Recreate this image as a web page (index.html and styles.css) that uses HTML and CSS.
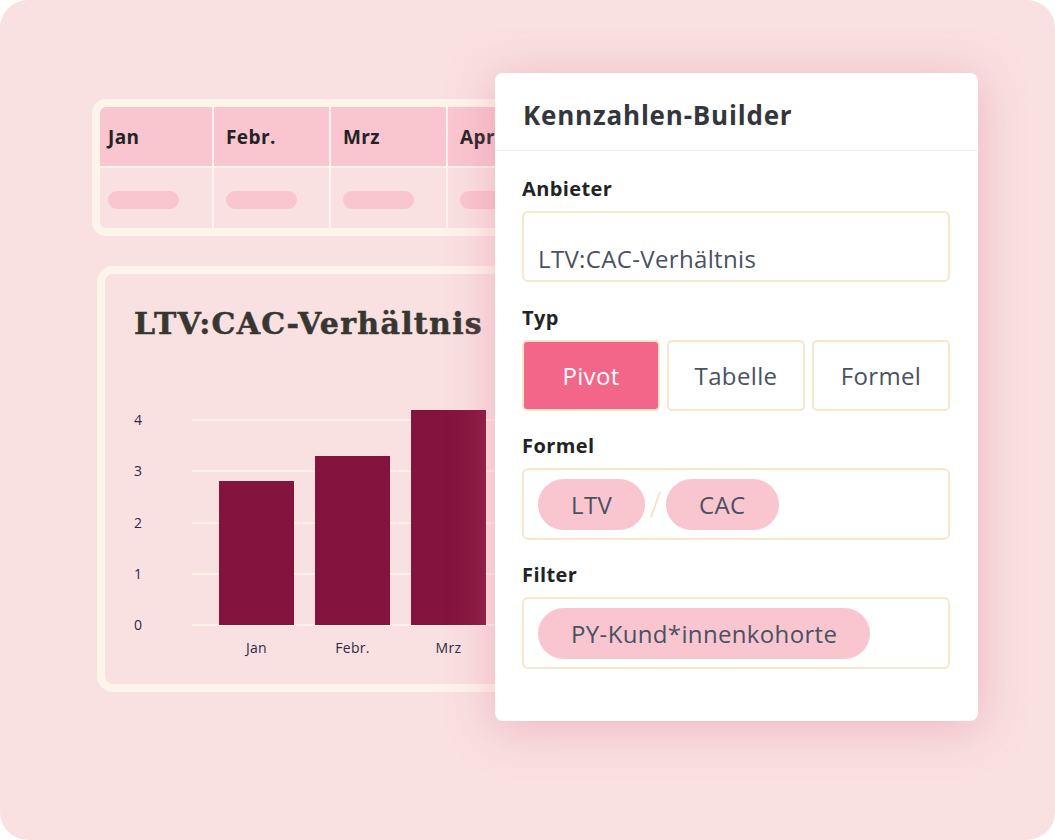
FILE: index.html
```html
<!DOCTYPE html>
<html lang="de">
<head>
<meta charset="utf-8">
<title>Kennzahlen-Builder</title>
<link rel="stylesheet" href="styles.css">
</head>
<body>
<div class="frame">
  <div class="table-card">
    <div class="cell head">Jan</div>
    <div class="cell head">Febr.</div>
    <div class="cell head">Mrz</div>
    <div class="cell head">Apr</div>
    <div class="cell body"><span class="pill"></span></div>
    <div class="cell body"><span class="pill"></span></div>
    <div class="cell body"><span class="pill"></span></div>
    <div class="cell body"><span class="pill"></span></div>
  </div>

  <div class="chart-card">
    <h2 class="chart-title">LTV:CAC-Verhältnis</h2>
    <div class="plot">
      <div class="grid-rows">
        <div class="grid-row"><span class="ylabel">4</span><span class="gline"></span></div>
        <div class="grid-row"><span class="ylabel">3</span><span class="gline"></span></div>
        <div class="grid-row"><span class="ylabel">2</span><span class="gline"></span></div>
        <div class="grid-row"><span class="ylabel">1</span><span class="gline"></span></div>
        <div class="grid-row"><span class="ylabel">0</span><span class="gline"></span></div>
      </div>
      <div class="bars">
        <div class="bar" style="height:144px"></div>
        <div class="bar" style="height:169px"></div>
        <div class="bar" style="height:215px"></div>
      </div>
    </div>
    <div class="xlabels">
      <span class="xlabel">Jan</span>
      <span class="xlabel">Febr.</span>
      <span class="xlabel">Mrz</span>
    </div>
  </div>

  <div class="panel">
    <div class="panel-head">Kennzahlen-Builder</div>
    <div class="panel-body">
      <div class="label">Anbieter</div>
      <div class="field text-field">LTV:CAC-Verhältnis</div>

      <div class="label">Typ</div>
      <div class="seg">
        <div class="seg-btn active">Pivot</div>
        <div class="seg-btn">Tabelle</div>
        <div class="seg-btn">Formel</div>
      </div>

      <div class="label">Formel</div>
      <div class="field chip-field">
        <span class="chip">LTV</span>
        <span class="slash">/</span>
        <span class="chip">CAC</span>
      </div>

      <div class="label">Filter</div>
      <div class="field chip-field last">
        <span class="chip">PY-Kund*innenkohorte</span>
      </div>
    </div>
  </div>
</div>
</body>
</html>
```

FILE: styles.css
```css
* { box-sizing: border-box; }

html, body {
  margin: 0;
  padding: 0;
  background: #ffffff;
}

body {
  font-family: "Open Sans", "Noto Sans", sans-serif;
  color: #222327;
}

.frame {
  position: relative;
  width: 1055px;
  height: 840px;
  border-radius: 28px;
  background: #f9e0e1;
  overflow: hidden;
  padding: 99px 0 0 92px;
}

/* ---------- table card ---------- */
.table-card {
  width: 480px;
  display: grid;
  grid-template-columns: 112px 115px 115px 115px;
  grid-template-rows: 59px 60px;
  gap: 2px;
  background: #fdf4ea;
  border: 8px solid #fdf4ea;
  border-radius: 14px;
  overflow: hidden;
}

.cell {
  padding-left: 12px;
}

.cell:nth-child(4n+1) {
  padding-left: 8px;
}

.cell.head {
  background: #f9c6d0;
  display: flex;
  align-items: center;
  font-size: 19px;
  font-weight: 700;
  letter-spacing: 0.4px;
  color: #232326;
}

.cell.body {
  background: #f9e0e1;
  padding-top: 23px;
}

.pill {
  display: block;
  width: 71px;
  height: 18px;
  border-radius: 9px;
  background: #f9c6d0;
}

/* ---------- chart card ---------- */
.chart-card {
  width: 480px;
  height: 426px;
  margin: 30px 0 0 5px;
  border: 8px solid #fdf4ea;
  border-radius: 16px;
  background: #f9e0e1;
  padding: 32px 0 0 29px;
}

.chart-title {
  margin: 0;
  font-family: "DejaVu Serif", "Liberation Serif", serif;
  font-weight: 700;
  font-size: 30px;
  line-height: 36px;
  letter-spacing: 1.3px;
  white-space: nowrap;
  -webkit-text-stroke: 0.5px #383631;
  color: #383631;
}

.plot {
  display: grid;
  height: 226px;
  margin-top: 58px;
}

.grid-rows,
.bars {
  grid-area: 1 / 1;
}

.grid-rows {
  display: flex;
  flex-direction: column;
  justify-content: space-between;
  padding-top: 19px;
}

.grid-row {
  display: flex;
  align-items: center;
  height: 2px;
}

.ylabel {
  width: 58px;
  font-size: 14px;
  line-height: 2px;
  letter-spacing: 0.3px;
  color: #2b2b45;
}

.gline {
  flex: 1;
  height: 2px;
  background: #fdf1e6;
}

.bars {
  display: flex;
  align-items: flex-end;
  gap: 21px;
  padding: 0 0 1px 85px;
}

.bar {
  width: 75px;
  background: #84133d;
}

.xlabels {
  display: flex;
  gap: 21px;
  padding-left: 85px;
  margin-top: 14px;
}

.xlabel {
  width: 75px;
  text-align: center;
  font-size: 14px;
  line-height: 16px;
  letter-spacing: 0.3px;
  color: #2b2b45;
}

/* ---------- builder panel ---------- */
.panel {
  position: absolute;
  left: 495px;
  top: 73px;
  width: 483px;
  height: 648px;
  background: #ffffff;
  border-radius: 8px;
  box-shadow: 0 6px 48px rgba(226, 118, 146, 0.42);
}

.panel-head {
  height: 78px;
  padding: 6px 28px 0;
  display: flex;
  align-items: center;
  border-bottom: 1px solid #eef0f4;
  font-size: 26px;
  font-weight: 700;
  letter-spacing: 0.8px;
  color: #33363d;
}

.panel-body {
  display: flex;
  flex-direction: column;
  padding: 27px 28px 52px 27px;
}

.label {
  font-size: 20px;
  font-weight: 700;
  line-height: 22px;
  letter-spacing: 0.4px;
  color: #222327;
  margin-bottom: 11px;
}

.field {
  border: 2px solid #f8e6cd;
  border-radius: 6px;
  font-size: 24px;
  letter-spacing: 0.35px;
  color: #4a5162;
}

.text-field {
  height: 71px;
  margin-bottom: 25px;
  display: flex;
  align-items: flex-end;
  padding: 0 14px 7px;
  line-height: 28px;
}

.seg {
  display: grid;
  grid-template-columns: repeat(3, 1fr);
  gap: 7px;
  height: 71px;
  margin-bottom: 24px;
}

.seg-btn {
  display: flex;
  align-items: center;
  justify-content: center;
  border: 2px solid #f8e6cd;
  border-radius: 5px;
  font-size: 24px;
  letter-spacing: 0.35px;
  color: #4a5162;
  background: #ffffff;
}

.seg-btn.active {
  background: #f4658a;
  color: #ffffff;
}

.chip-field {
  height: 72px;
  margin-bottom: 24px;
  display: flex;
  align-items: center;
  padding: 0 14px;
}

.chip-field.last {
  margin-bottom: 0;
}

.chip {
  display: flex;
  align-items: center;
  height: 51px;
  padding: 0 33px;
  border-radius: 26px;
  background: #f9c6d0;
  font-size: 24px;
  color: #4a5162;
}

.slash {
  width: 21px;
  text-align: center;
  font-size: 34px;
  font-weight: 300;
  color: #f7e2c3;
}
```
